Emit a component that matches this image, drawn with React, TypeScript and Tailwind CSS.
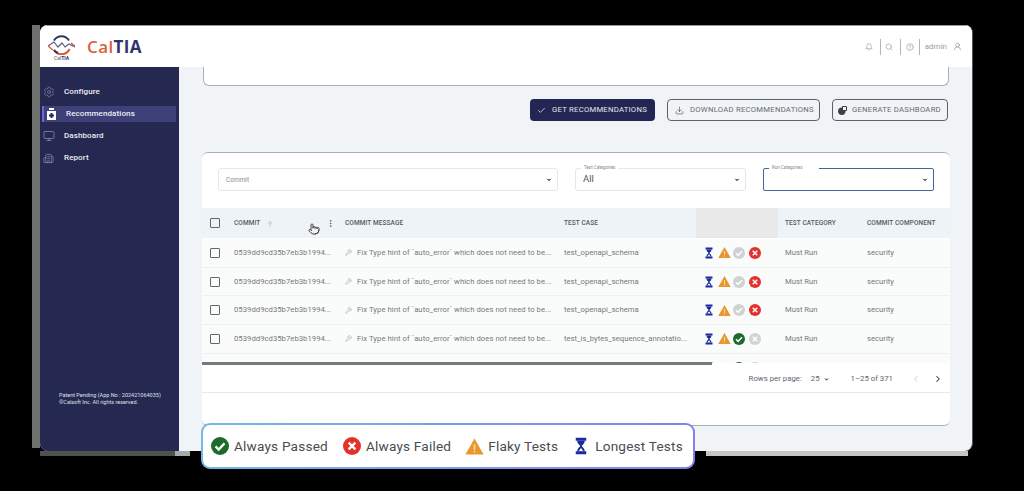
import { Settings, Bell, Search, CircleHelp, UserRound, Check, Download, ChevronDown, ChevronLeft, ChevronRight, ArrowUp, EllipsisVertical, Wrench, Pointer, Monitor, Building2 } from "lucide-react";

const Hourglass = ({ size = 10 }: { size?: number }) => (
  <svg width={size * 0.8} height={size * 1.2} viewBox="0 0 16 24" className="shrink-0">
    <path d="M1 1h14v4H1zM1 19h14v4H1z" fill="#1c2a9c" />
    <path d="M3 5h10c0 4-3 5-4 7 1 2 4 3 4 7H3c0-4 3-5 4-7-1-2-4-3-4-7z" fill="#1c2a9c" />
    <path d="M5.500 18.500c.5-2 2-3 2.500-4 .5 1 2 2 2.500 4z" fill="#fff" />
  </svg>
);
const Tri = ({ size = 13 }: { size?: number }) => (
  <svg width={size} height={size} viewBox="0 0 24 24" className="shrink-0">
    <path d="M12 2 23.500 22H.5z" fill="#e8962e" />
    <path d="M11 9h2v7h-2zM11 17.500h2v2h-2z" fill="#f8dcb0" />
  </svg>
);
const Ok = ({ size = 12, color = "#1d6b2b" }: { size?: number; color?: string }) => (
  <svg width={size} height={size} viewBox="0 0 24 24" className="shrink-0">
    <circle cx="12" cy="12" r="12" fill={color} />
    <path d="M6 12.500l4.200 4.200L18 8.500" fill="none" stroke="#fff" strokeWidth="3" />
  </svg>
);
const Bad = ({ size = 12, color = "#e4312b" }: { size?: number; color?: string }) => (
  <svg width={size} height={size} viewBox="0 0 24 24" className="shrink-0">
    <circle cx="12" cy="12" r="12" fill={color} />
    <path d="M7.500 7.500l9 9M16.500 7.500l-9 9" fill="none" stroke="#fff" strokeWidth="3" />
  </svg>
);

const Logo = () => (
  <svg width="27" height="20" viewBox="0 0 27 20" className="shrink-0">
    <path d="M6 5.500A8.800 8.800 0 0 1 21 5.500" fill="none" stroke="#2f3566" strokeWidth="2" />
    <path d="M21.500 14A8.800 8.800 0 0 1 6 15" fill="none" stroke="#d9552f" strokeWidth="2" />
    <path d="M6 15A8.800 8.800 0 0 0 10 18" fill="none" stroke="#2f3566" strokeWidth="2" />
    <path d="M0 11l6-4 4 5 4-4 3 4 4-3 6 3" fill="none" stroke="#5c607f" strokeWidth="1.200" />
    <path d="M0 11l5 4M27 11l-4-3" fill="none" stroke="#d9552f" strokeWidth="1.200" />
  </svg>
);

const JarIcon = () => (
  <svg width="9" height="12" viewBox="0 0 9 12" className="shrink-0">
    <path d="M2 0h5v2H2zM0 3h9v9H0z" fill="#fff" />
    <path d="M3.500 5h2v1.500H7v2H5.500V10h-2V8.500H2v-2h1.500z" fill="#252850" />
  </svg>
);

const GenIcon = () => (
  <svg width="9" height="9" viewBox="0 0 9 9" className="shrink-0">
    <circle cx="3.800" cy="5.200" r="3.700" fill="#3b3f48" />
    <path d="M4.500 .5h4v4h-4z" fill="#f1f4f6" stroke="#3b3f48" strokeWidth="1" />
  </svg>
);

const Nav = ({ icon, label, active }: { icon: React.ReactNode; label: string; active?: boolean }) => (
  <div className={active ? "h-[16px] ml-[2px] mr-[3px] flex items-center bg-[#3e4078] border-l-2 border-[#6c66dc]" : "h-[16px] ml-[3px] flex items-center"}>
    <span className={active ? "w-[22px] pl-[3px] flex text-white" : "w-[21px] flex text-[#8d90ae]"}>{icon}</span>
    <span className="text-[8px] font-medium text-[#eceef6] tracking-[0.1px]">{label}</span>
  </div>
);

const rows = [
  { t: "test_openapi_schema", pass: false },
  { t: "test_openapi_schema", pass: false },
  { t: "test_openapi_schema", pass: false },
  { t: "test_is_bytes_sequence_annotatio...", pass: true },
];

const Cb = () => <span className="block w-[10px] h-[10px] border border-[#666] rounded-[1px]" />;

const StatusIcons = ({ pass }: { pass: boolean }) => (
  <div className="w-[89px] flex items-center pl-[9px]">
    <Hourglass size={10} />
    <span className="ml-[5px]"><Tri size={13} /></span>
    <span className="ml-[2px]">{pass ? <Ok size={12} /> : <Ok size={12} color="#cfd1d3" />}</span>
    <span className="ml-[4px]">{pass ? <Bad size={12} color="#d0d2d4" /> : <Bad size={12} />}</span>
  </div>
);

export default function App() {
  return (
    <div className="w-[1024px] h-[491px] bg-black overflow-hidden relative pt-[25px] pl-[32px] font-['Roboto',sans-serif]">
      <div className="flex">
        <div className="w-[8px] h-[423px] bg-[#6f716f]" />
        <div className="w-[933px] h-[426px] rounded-[8px] overflow-hidden flex flex-col bg-[#f1f4f6] border-r border-[#555]">
          {/* header */}
          <div className="h-[42px] shrink-0 bg-white flex items-center border-t border-[#999]">
            <div className="pl-[8px] flex items-center">
              <div className="flex flex-col items-center w-[27px] pt-[2px]">
                <Logo />
                <span className="text-[5px] leading-[6px] font-medium text-[#777]">Cal<span className="font-bold text-[#2e3668]">TIA</span></span>
              </div>
              <span className="ml-[12px] text-[17px] font-bold tracking-[0.4px] font-['Open_Sans',sans-serif]">
                <span className="text-[#d9623c] font-semibold">Cal</span>
                <span className="text-[#2e3668]">TIA</span>
              </span>
            </div>
            <div className="ml-auto flex items-center text-[#9a9da1] pr-[10px]">
              <Bell size={8} />
              <span className="w-px h-[16px] bg-[#b5b5b5] ml-[7px]" />
              <Search size={8} className="ml-[4px]" />
              <span className="w-px h-[16px] bg-[#b5b5b5] ml-[7px]" />
              <CircleHelp size={8} className="ml-[5px]" />
              <span className="w-px h-[16px] bg-[#b5b5b5] ml-[5px]" />
              <span className="ml-[5px] text-[8px]">admin</span>
              <UserRound size={9} className="ml-[6px]" />
            </div>
          </div>
          <div className="flex flex-1 min-h-0">
            {/* sidebar */}
            <aside className="w-[139px] shrink-0 bg-[#252850] flex flex-col pt-[17px]">
              <div className="flex flex-col gap-[6px]">
                <Nav icon={<Settings size={12} strokeWidth={1.200} />} label="Configure" />
                <Nav active icon={<JarIcon />} label="Recommendations" />
                <Nav icon={<Monitor size={12} strokeWidth={1.500} />} label="Dashboard" />
                <Nav icon={<Building2 size={11} strokeWidth={1.500} />} label="Report" />
              </div>
              <div className="mt-[226px] pl-[19px] text-[5.500px] leading-[7px] text-[#dfe1ec]">
                <div>Patent Pending (App No : 202421064035)</div>
                <div>©Calsoft Inc. All rights reserved.</div>
              </div>
            </aside>
            {/* main */}
            <main className="flex-1 min-w-0 pl-[23px] pr-[22px] flex flex-col">
              <div className="h-[19px] shrink-0 ml-px w-[746px] bg-white rounded-b-[6px] border-b border-x border-[#a9afb8]" />
              <div className="mt-[13px] h-[22px] shrink-0 flex justify-end gap-[12px] pr-[2px] text-[7.700px] tracking-[0.25px] whitespace-nowrap">
                <div className="w-[125px] rounded-[4px] bg-[#232653] text-[#e6e8f2] flex items-center pl-[7px] gap-[6px]">
                  <Check size={9} />
                  GET RECOMMENDATIONS
                </div>
                <div className="w-[153px] rounded-[4px] border border-[#5c6068] text-[#666a70] flex items-center pl-[7px] gap-[6px]">
                  <Download size={9} />
                  DOWNLOAD RECOMMENDATIONS
                </div>
                <div className="w-[116px] rounded-[4px] border border-[#5c6068] text-[#666a70] flex items-center pl-[5px] gap-[5px]">
                  <GenIcon />
                  GENERATE DASHBOARD
                </div>
              </div>
              {/* card */}
              <div className="mt-[31px] w-[748px] h-[274px] shrink-0 bg-white rounded-[6px] border-t border-b border-t-[#a9afb8] border-b-[#a9afb8] flex flex-col">
                <div className="h-[55px] shrink-0 flex items-start pt-[15px] pl-[16px] gap-[17px]">
                  <div className="w-[340px] h-[23px] rounded-[3px] border border-[#e4e6ea] flex items-center pl-[7px] pr-[4px] text-[6.500px] text-[#8a8d92]">
                    <span className="pt-[3px]">Commit</span>
                    <ChevronDown size={8} className="ml-auto text-[#666]" fill="#666" />
                  </div>
                  <div className="w-[171px] h-[23px] rounded-[3px] border border-[#e4e6ea] relative flex items-center pl-[7px] pr-[4px] text-[9.500px] text-[#555]">
                    <span className="absolute -top-[4px] left-[5px] bg-white px-[3px] text-[4.500px] text-[#888]">Test Categories</span>
                    All
                    <ChevronDown size={8} className="ml-auto text-[#666]" fill="#666" />
                  </div>
                  <div className="w-[171px] h-[23px] rounded-[2px] border border-[#41679a] relative flex items-center pr-[4px]">
                    <span className="absolute -top-[4px] left-[5px] bg-white px-[3px] w-[50px] text-[4.500px] text-[#888]">Run Categories</span>
                    <ChevronDown size={8} className="ml-auto text-[#666]" fill="#666" />
                  </div>
                </div>
                {/* table head */}
                <div className="h-[30px] shrink-0 flex items-center bg-[#eef3f7] text-[6.500px] font-medium text-[#555a60] tracking-[0.1px] pt-[2px]">
                  <div className="w-[32px] pl-[8px] flex -mt-[2px]"><Cb /></div>
                  <div className="w-[111px] flex items-center relative h-full">
                    COMMIT
                    <ArrowUp size={8} className="ml-[6px] text-[#b3b7bc]" />
                    <Pointer size={12} className="absolute left-[74px] top-[13px] text-[#444]" />
                    <EllipsisVertical size={9} className="absolute left-[92px] top-[9px] text-[#555]" />
                  </div>
                  <div className="w-[219px]">COMMIT MESSAGE</div>
                  <div className="w-[132px]">TEST CASE</div>
                  <div className="w-[82px] h-[30px] -mt-[2px] bg-[#e9e9ea] mr-[7px]" />
                  <div className="w-[82px]">TEST CATEGORY</div>
                  <div className="w-[83px]">COMMIT COMPONENT</div>
                </div>
                {/* rows */}
                <div className="h-[125px] shrink-0 overflow-hidden pt-[1px]">
                  {rows.map((r, i) => (
                    <div key={i} className="h-[28.700px] flex items-center bg-[#fafcfc] border-b border-[#eef0f2] text-[7.700px] text-[#74787d]">
                      <div className="w-[32px] pl-[8px] flex"><Cb /></div>
                      <div className="w-[111px] tracking-[0.03px]">0539dd9cd35b7eb3b1994...</div>
                      <div className="w-[219px] flex items-center tracking-[0.06px]">
                        <Wrench size={7} className="mr-[5px] text-[#a5a8ac]" />
                        Fix Type hint of `auto_error` which does not need to be...
                      </div>
                      <div className="w-[132px] whitespace-nowrap">{r.t}</div>
                      <StatusIcons pass={r.pass} />
                      <div className="w-[82px]">Must Run</div>
                      <div className="w-[83px]">security</div>
                    </div>
                  ))}
                  <div className="h-[28.700px] flex items-center bg-[#fafcfc]">
                    <div className="w-[32px] pl-[8px] flex"><Cb /></div>
                    <div className="w-[462px]" />
                    <StatusIcons pass />
                  </div>
                </div>
                <div className="h-[3px] shrink-0 w-[510px] -mt-[1px] bg-[#77797b]" />
                <div className="h-[28px] shrink-0 border-b border-[#e7e9eb] flex items-center justify-end text-[7.800px] text-[#63676c] pr-[7px] pt-[1px]">
                  <span>Rows per page:</span>
                  <span className="ml-[9px] flex items-center">25<ChevronDown size={7} className="ml-[3px]" fill="#63676c" /></span>
                  <span className="ml-[21px]">1–25 of 371</span>
                  <ChevronLeft size={10} className="ml-[18px] text-[#c4c6c9]" />
                  <ChevronRight size={10} className="ml-[12px] text-[#333]" strokeWidth={2.500} />
                </div>
              </div>
            </main>
          </div>
        </div>
      </div>
      {/* shadow strip under the window */}
      <div className="ml-[8px] h-[5px] flex">
        <div className="w-[135px] bg-[#4f524f]" />
        <div className="w-[15px] bg-[#a8aaa8]" />
        <div className="w-[516px]" />
        <div className="w-[262px] bg-[#c4c6c4]" />
      </div>
      {/* legend overlay */}
      <div className="absolute left-[201px] top-[423px] w-[494px] h-[46px] rounded-[9px] p-[2px] bg-gradient-to-r from-[#74b8e4] to-[#8480ea]">
        <div className="w-full h-full rounded-[7px] bg-white flex items-center pl-[8px] text-[13.600px] text-[#4a4c50] tracking-[0.2px] whitespace-nowrap">
          <Ok size={18} />
          <span className="ml-[5px]">Always Passed</span>
          <span className="ml-[15px]"><Bad size={18} /></span>
          <span className="ml-[5px]">Always Failed</span>
          <span className="ml-[14px]"><Tri size={19} /></span>
          <span className="ml-[4px]">Flaky Tests</span>
          <span className="ml-[17px]"><Hourglass size={15} /></span>
          <span className="ml-[8px]">Longest Tests</span>
        </div>
      </div>
    </div>
  );
}
